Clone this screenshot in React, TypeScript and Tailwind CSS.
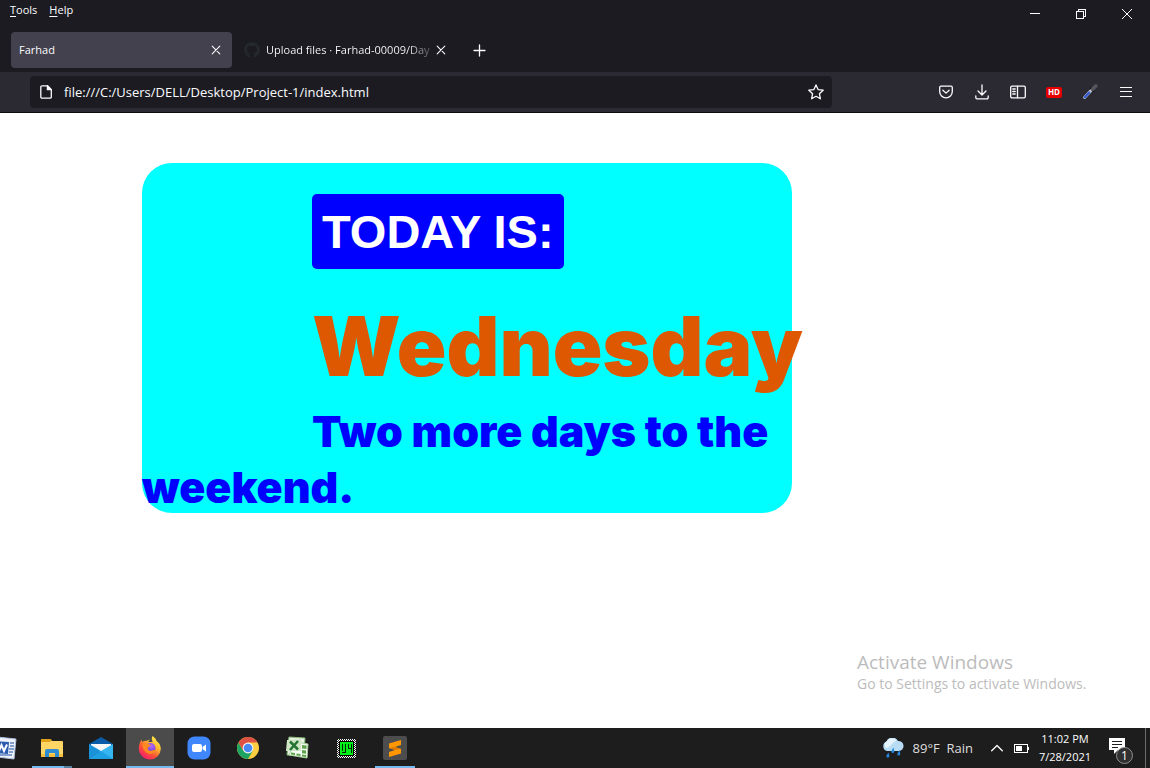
import type { ReactNode } from "react";
import { FaGithub } from "react-icons/fa";

const line = {
  fill: "none",
  stroke: "currentColor",
  strokeLinecap: "round",
  strokeLinejoin: "round",
} as const;

function CloseIcon() {
  return (
    <svg width="10" height="10" viewBox="0 0 10 10" {...line} strokeWidth="1.1">
      <path d="M1.2 1.2l7.6 7.6M8.8 1.2L1.2 8.8" />
    </svg>
  );
}

function WindowButton({ label, children }: { label: string; children: ReactNode }) {
  return (
    <button aria-label={label} className="flex h-7 w-[46px] items-center justify-center">
      {children}
    </button>
  );
}

function TitleBar() {
  return (
    <div className="flex h-8 items-start justify-between">
      <nav className="flex gap-3 pl-[10px] pt-px text-[11px] leading-[18px]">
        <button>
          <span className="underline underline-offset-2">T</span>ools
        </button>
        <button>
          <span className="underline underline-offset-2">H</span>elp
        </button>
      </nav>
      <div className="flex">
        <WindowButton label="Minimize">
          <svg width="10" height="10" viewBox="0 0 10 10" shapeRendering="crispEdges">
            <path d="M0 4h10v1H0z" fill="currentColor" />
          </svg>
        </WindowButton>
        <WindowButton label="Restore">
          <svg width="10" height="10" viewBox="0 0 10 10" {...line} strokeLinecap="butt" shapeRendering="crispEdges">
            <path d="M.5 2.5h7v7h-7zM2.5 2V.5h7v7H8" />
          </svg>
        </WindowButton>
        <WindowButton label="Close window">
          <svg width="10" height="10" viewBox="0 0 10 10" {...line} strokeLinecap="butt">
            <path d="M0 0l10 10M10 0L0 10" />
          </svg>
        </WindowButton>
      </div>
    </div>
  );
}

function TabStrip() {
  return (
    <div className="flex h-10 items-start pl-[11px] text-[11px]">
      <div className="flex h-9 w-[221px] items-center justify-between rounded bg-[#42414d] pl-2 pr-[11px]">
        <button className="pt-px">Farhad</button>
        <button aria-label="Close Farhad tab">
          <CloseIcon />
        </button>
      </div>
      <div className="flex h-9 w-[225px] items-center pl-3 pr-[11px]">
        <FaGithub size={16} color="#24292e" className="shrink-0" />
        <button className="ml-[6px] min-w-0 flex-1 whitespace-nowrap bg-linear-to-r from-white from-85% to-[#4a4950] bg-clip-text pt-px text-left text-transparent">
          Upload files · Farhad-00009/Day
        </button>
        <button aria-label="Close Upload files tab" className="ml-1 shrink-0">
          <CloseIcon />
        </button>
      </div>
      <button aria-label="New tab" className="ml-4 flex h-9 items-center">
        <svg width="13" height="13" viewBox="0 0 13 13" {...line} strokeWidth="1.3">
          <path d="M6.5 1v11M1 6.5h11" />
        </svg>
      </button>
    </div>
  );
}

function ToolbarButton({ label, children }: { label: string; children: ReactNode }) {
  return (
    <button aria-label={label} className="flex h-8 w-9 items-center justify-center">
      {children}
    </button>
  );
}

function NavBar() {
  return (
    <div className="flex h-[41px] items-center justify-between border-b border-[#0c0c0d] bg-[#2b2a33] pl-[30px] pr-[6px]">
      <div className="flex h-8 w-[802px] items-center rounded bg-[#1c1b22] pl-[10px] pr-2">
        <svg width="12" height="14" viewBox="0 0 12 14" {...line} strokeWidth="1.3">
          <path d="M2 .8h5.4l3.9 3.9v7.3a1.2 1.2 0 0 1-1.2 1.2H2A1.2 1.2 0 0 1 .8 12V2A1.2 1.2 0 0 1 2 .8z" />
          <path d="M7.4.8v3.9h3.9z" fill="currentColor" />
        </svg>
        <input
          aria-label="Address"
          defaultValue="file:///C:/Users/DELL/Desktop/Project-1/index.html"
          className="ml-3 min-w-0 flex-1 bg-transparent pt-[2px] text-[13px] outline-none"
        />
        <button aria-label="Bookmark this page">
          <svg width="16" height="16" viewBox="0 0 16 16" {...line} strokeWidth="1.3">
            <path d="M8 .9l2.1 4.7 5.1.6-3.8 3.5 1 5.1L8 12.3l-4.4 2.5 1-5.1L.8 6.2l5.1-.6z" />
          </svg>
        </button>
      </div>
      <div className="flex">
        <ToolbarButton label="Save to Pocket">
          <svg width="14" height="14" viewBox="0 0 14 14" {...line} strokeWidth="1.3">
            <path d="M2 1.2h10A1.3 1.3 0 0 1 13.3 2.5v4A6.3 6.3 0 0 1 .7 6.5v-4A1.3 1.3 0 0 1 2 1.2z" />
            <path d="M3.9 5.2L7 8.1l3.1-2.9" />
          </svg>
        </ToolbarButton>
        <ToolbarButton label="Downloads">
          <svg width="14" height="16" viewBox="0 0 14 16" {...line} strokeWidth="1.3">
            <path d="M7 .8v10M3 7l4 4 4-4M.8 12v1.6A1.2 1.2 0 0 0 2 14.8h10a1.2 1.2 0 0 0 1.2-1.2V12" />
          </svg>
        </ToolbarButton>
        <ToolbarButton label="Sidebars">
          <svg width="16" height="14" viewBox="0 0 16 14" {...line} strokeWidth="1.3">
            <rect x=".7" y="1.2" width="14.6" height="11.6" rx="1.3" />
            <path d="M7.5 1.2v11.6M2.8 4h2.4M2.8 6.5h2.4M2.8 9h2.4" />
          </svg>
        </ToolbarButton>
        <ToolbarButton label="HD video settings">
          <span className="flex h-[11px] w-4 items-center justify-center rounded-[2px] bg-[#e60000] text-[8px] font-bold leading-none">
            HD
          </span>
        </ToolbarButton>
        <ToolbarButton label="Color picker">
          <svg width="16" height="16" viewBox="0 0 16 16" fill="none" strokeLinecap="round">
            <path d="M2.5 13.5l7-7.6" stroke="#b9c0cc" strokeWidth="3" />
            <path d="M2.7 13.3l4.5-4.8" stroke="#3157d5" strokeWidth="2" />
            <path d="M8.5 4.2l3.200 3.200" stroke="#18181c" strokeWidth="1.800" />
            <path d="M10.800 5l3-3" stroke="#55555c" strokeWidth="3.600" />
          </svg>
        </ToolbarButton>
        <ToolbarButton label="Open menu">
          <svg width="12" height="10" viewBox="0 0 12 10" shapeRendering="crispEdges" fill="currentColor">
            <path d="M0 0h12v1H0zM0 4h12v1H0zM0 9h12v1H0z" />
          </svg>
        </ToolbarButton>
      </div>
    </div>
  );
}

function WebPage() {
  return (
    <main className="relative flex-1 bg-white pl-[142px] pt-[50px]">
      <section className="h-[350px] w-[650px] rounded-[30px] bg-[#00ffff] pt-[31px] font-['Arial_Black',Inter,sans-serif] font-black">
        <h2 className="ml-[170px] w-fit rounded-[5px] bg-[#0000ff] p-[10px] font-['Liberation_Sans',Arial,sans-serif] text-[47px] font-bold leading-[55px] text-white">
          TODAY IS:
        </h2>
        <h1 className="pl-[170px] pt-[22px] text-[82px] leading-[112px] text-[#dd5800]">Wednesday</h1>
        <p className="indent-[170px] text-[43px] leading-[56px] text-[#0000ff]">Two more days to the weekend.</p>
      </section>
      <aside className="absolute bottom-[34px] right-[57px] w-[236px] text-[#bcbcbc]">
        <p className="text-[19px] leading-[24px]">Activate Windows</p>
        <p className="text-[14px] leading-[20px]">Go to Settings to activate Windows.</p>
      </aside>
    </main>
  );
}

function WordIcon() {
  return (
    <svg width="28" height="26" viewBox="0 0 28 26">
      <path d="M8 2l19 2-2 20-17-2z" fill="#eef3fb" stroke="#aebfd9" />
      <path d="M21 8h4M21 11h4M20 14h5M20 17h4M11 20h12" stroke="#5f82bd" strokeWidth="1.5" />
      <path d="M1 6l19 1-1 12-18-1z" fill="#2a5cb0" />
      <path d="M7 9l3 7 2.500-6 2.500 6 3-6.500" fill="none" stroke="#fff" strokeWidth="2" />
    </svg>
  );
}

function ExplorerIcon() {
  return (
    <svg width="22" height="20" viewBox="0 0 22 20">
      <path d="M0 2a1 1 0 0 1 1-1h8l2 2h10a1 1 0 0 1 1 1v14H0z" fill="#ffd566" />
      <path d="M0 1h9l2 1-2 2H0z" fill="#e0a21b" />
      <path d="M0 16h22v3H0z" fill="#f6bd3e" />
      <path d="M4 19v-6a2 2 0 0 1 2-2h10a2 2 0 0 1 2 2v6h-4v-4H8v4z" fill="#2f8cd0" />
    </svg>
  );
}

function MailIcon() {
  return (
    <svg width="24" height="22" viewBox="0 0 24 22">
      <path d="M0 7L12 0l12 7v3H0z" fill="#0a5ca8" />
      <path d="M2 7h20v8H2z" fill="#f5f7f9" />
      <path d="M0 7l12 7-12 8z" fill="#1a92da" />
      <path d="M24 7v15H0L12 14z" fill="#35b6f0" />
      <path d="M12 14l12 8H0z" fill="#1e9fe2" />
    </svg>
  );
}

function FirefoxIcon() {
  return (
    <svg width="24" height="24" viewBox="0 0 24 24">
      <defs>
        <linearGradient id="fox" x1=".85" y1=".05" x2=".2" y2=".95">
          <stop offset="0" stopColor="#fff44f" />
          <stop offset=".35" stopColor="#ffb52e" />
          <stop offset=".65" stopColor="#ff5634" />
          <stop offset="1" stopColor="#f3196f" />
        </linearGradient>
        <radialGradient id="globe" cx=".6" cy=".3" r=".8">
          <stop offset="0" stopColor="#b36bff" />
          <stop offset="1" stopColor="#5636c4" />
        </radialGradient>
      </defs>
      <path
        d="M14.5 0c2.5 1.5 3.7 3.4 4 5 2.6 1.800 4.300 4.500 4.300 8A11 11 0 0 1 12 23.500 11.200 11.200 0 0 1 .8 12.500C.8 8.500 2.200 5.500 3.700 3.500c0 1 .2 1.700.7 2.400C5.500 5 7.200 4.500 8.500 5c1-.8 2.400-1.300 3.300-1.300-.9.700-1.500 1.600-1.800 2.400h4.700c-1-2.200-1.300-4.300-.2-6.100z"
        fill="url(#fox)"
      />
      <circle cx="12.500" cy="12" r="5" fill="url(#globe)" />
      <path d="M4.500 8c2-1.500 4.700-1.200 6 .2 1 .2 2.200.3 2.500 1-1 1.500-3 1.500-3.400 3 .2 2.200 3 3.500 5.400 2 2-.8 3 .3 2.300 1.200-4 5.500-13 1.500-12.800-7.400z" fill="#ff8a22" />
    </svg>
  );
}

function ZoomIcon() {
  return (
    <svg width="24" height="24" viewBox="0 0 24 24">
      <rect x=".5" y=".5" width="23" height="23" rx="7" fill="#4087fc" />
      <rect x="5" y="8" width="10" height="8" rx="2" fill="#fff" />
      <path d="M15.5 11L19 8.500v7.200L15.500 13z" fill="#fff" />
    </svg>
  );
}

function ChromeIcon() {
  return (
    <svg width="22" height="22" viewBox="0 0 22 22">
      <circle cx="11" cy="11" r="11" fill="#ffcd40" />
      <path d="M1.500 5.500A11 11 0 0 0 11 22l4.800-8.300H6.200z" fill="#1da362" />
      <path d="M11 11L6.200 13.700 1.500 5.500A11 11 0 0 1 20.500 5.500H11z" fill="#dd5144" />
      <circle cx="11" cy="11" r="5.400" fill="#f5f5f5" />
      <circle cx="11" cy="11" r="4.300" fill="#4688f4" />
    </svg>
  );
}

function ExcelIcon() {
  return (
    <svg width="24" height="24" viewBox="0 0 24 24">
      <path d="M4 1l16 1-1 18-17-1z" fill="#e7f3e2" stroke="#84b775" />
      <path d="M10 6l13 2-1 14-18-3z" fill="#f8fcf6" stroke="#a9cf9c" />
      <path d="M17 9l4.500.5v3.500l-4.500-.5zM17 14l4 .4v3.300l-4-.5zM6 16.500l4 .6v2l-4-.6zM11.500 17.500l4 .5v2l-4-.6zM17 18.500l4 .5v2l-4-.5z" fill="#5ca54a" />
      <path d="M2 4l14-1v12L1 15z" fill="#cfe7c5" />
      <path d="M5 5.500l8 8M13 5L5 14" stroke="#267434" strokeWidth="2.600" />
    </svg>
  );
}

function ChipIcon() {
  return (
    <svg width="19" height="19" viewBox="0 0 19 19" shapeRendering="crispEdges">
      <path
        d="M1 .5h18M1 18.500h18M.5 1v18M18.500 1v18"
        fill="none"
        stroke="#fff"
        strokeWidth="1"
        strokeDasharray="1 1"
      />
      <path d="M2 1.500h16M2 17.500h16M1.500 2v16M17.500 2v16" stroke="#fff" strokeDasharray="1 1" />
      <rect x="2" y="2" width="15" height="15" fill="#000" />
      <rect x="3" y="3" width="13" height="13" fill="#00f018" />
      <path d="M5 5h1v7H5zM5 13h1v1H5zM8 5h1v9H8zM6 13h2v1H6zM11 5h1v4h2V5h1v9h-1v-4h-3z" fill="#002d04" />
    </svg>
  );
}

function SublimeIcon() {
  return (
    <svg width="24" height="24" viewBox="0 0 24 24">
      <rect width="24" height="24" rx="2" fill="#4d4d4d" />
      <path d="M18 4v5l-6 2 6 2v4.500L6 21v-5l6-2-6-2V7.500z" fill="#ff9800" />
      <path d="M6 12l6-1 6 2-6 1z" fill="#dd7800" />
    </svg>
  );
}

const apps: { name: string; icon: ReactNode; active?: boolean; mark?: string }[] = [
  { name: "Word", icon: <WordIcon /> },
  { name: "File Explorer", icon: <ExplorerIcon />, mark: "left-1 w-10 bg-linear-to-r from-[#76b9ed] from-80% to-[#547f9f] to-80%" },
  { name: "Mail", icon: <MailIcon /> },
  { name: "Firefox", icon: <FirefoxIcon />, active: true, mark: "left-0 w-12 bg-[#76b9ed]" },
  { name: "Zoom", icon: <ZoomIcon /> },
  { name: "Chrome", icon: <ChromeIcon /> },
  { name: "Excel", icon: <ExcelIcon /> },
  { name: "Chip", icon: <ChipIcon /> },
  { name: "Sublime Text", icon: <SublimeIcon />, mark: "left-1 w-10 bg-[#76b9ed]" },
];

function RainIcon() {
  return (
    <svg width="22" height="20" viewBox="0 0 22 20">
      <path d="M5 13a5 5 0 0 1-.5-9.500A6.300 6.300 0 0 1 16 3a5 5 0 0 1 1 10z" fill="#b9dcf5" />
      <path d="M4 10a4.300 4.300 0 0 1 1-7A5.500 5.500 0 0 1 14.500 3c-4 0-5 6-10.500 7z" fill="#e5f3fc" />
      <path d="M6.500 14.500l-1.700 2.500a1.500 1.500 0 1 0 2.500.6zM11.500 9.500l-1.800 3a1.500 1.500 0 1 0 2.500.5zM17.500 12l-1.800 3a1.500 1.500 0 1 0 2.500.6z" fill="#2485dd" />
    </svg>
  );
}

function Taskbar() {
  return (
    <footer className="flex h-10 justify-between overflow-hidden bg-[#1d1d1d] text-[12px] text-white">
      <div className="-ml-[21px] flex gap-px">
        {apps.map((app) => (
          <button
            key={app.name}
            aria-label={app.name}
            className={`relative flex w-12 items-center justify-center ${app.active ? "bg-[#4b4b4b]" : ""}`}
          >
            {app.icon}
            {app.mark && <span className={`absolute bottom-0 h-[2px] ${app.mark}`} />}
          </button>
        ))}
      </div>
      <div className="flex items-center">
        <button className="flex items-center gap-[9px] text-[13px] text-[#dedede]">
          <RainIcon />
          <span className="whitespace-pre pt-px">89°F  Rain</span>
        </button>
        <button aria-label="Show hidden icons" className="ml-[18px]">
          <svg width="12" height="8" viewBox="0 0 12 8" {...line} strokeWidth="1.3">
            <path d="M.7 6.800L6 1.500l5.300 5.300" />
          </svg>
        </button>
        <button aria-label="Battery" className="ml-[11px]">
          <svg width="15" height="9" viewBox="0 0 15 9" fill="currentColor" shapeRendering="crispEdges">
            <path d="M0 0h14v9H0zM1 1v7h12V1z" fillRule="evenodd" />
            <path d="M2 2h6v5H2zM14 3h1v3h-1z" />
          </svg>
        </button>
        <button className="ml-[9px] flex w-[54px] flex-col items-center whitespace-nowrap text-[11px] leading-[18px]">
          <span>11:02 PM</span>
          <span>7/28/2021</span>
        </button>
        <button aria-label="1 notification" className="relative ml-[17px] h-10 w-[37px] border-r border-[#6b6b6b]">
          <svg width="26" height="26" viewBox="0 0 26 26" className="mt-[6px]">
            <path d="M0 0h16v12H9l-4 4v-4H0z" fill="#fff" />
            <path d="M3 3.500h10M3 6.500h10M3 9.500h6" stroke="#1d1d1d" />
          </svg>
          <span className="absolute left-[7px] top-[19px] flex size-[17px] items-center justify-center rounded-full border border-[#929292] bg-[#303030] text-[12px]">
            1
          </span>
        </button>
        <span className="w-1" />
      </div>
    </footer>
  );
}

export default function App() {
  return (
    <div className="flex min-h-screen flex-col overflow-hidden font-['Segoe_UI','Open_Sans',sans-serif]">
      <header className="bg-[#1c1b22] text-[#fbfbfe]">
        <TitleBar />
        <TabStrip />
        <NavBar />
      </header>
      <WebPage />
      <Taskbar />
    </div>
  );
}
